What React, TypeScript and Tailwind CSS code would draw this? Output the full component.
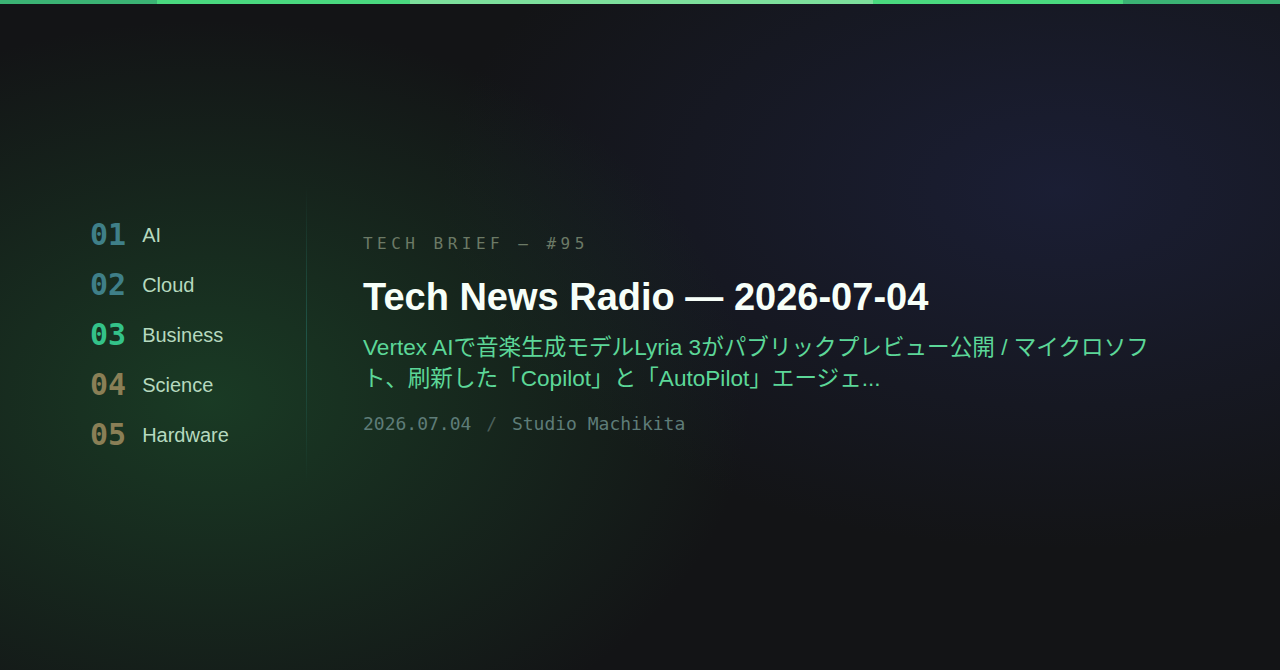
import React from "react";

const topics = [
  { n: "01", label: "AI", color: "text-[#3f7f88]" },
  { n: "02", label: "Cloud", color: "text-[#3f7f88]" },
  { n: "03", label: "Business", color: "text-[#34c289]" },
  { n: "04", label: "Science", color: "text-[#8a7f56]" },
  { n: "05", label: "Hardware", color: "text-[#8a7f56]" },
];

export default function App() {
  return (
    <div className="relative h-[670px] w-full overflow-hidden bg-[#131416] bg-[radial-gradient(ellipse_540px_380px_at_210px_400px,rgba(30,84,46,0.6),transparent),radial-gradient(ellipse_620px_360px_at_1060px_190px,rgba(34,40,82,0.5),transparent)] flex flex-col">
      <div className="flex h-1 w-full shrink-0">
        <div className="w-[12.3%] bg-[#3bb374]" />
        <div className="w-[19.7%] bg-[#4ad97f]" />
        <div className="w-[36.2%] bg-[#7ddf9c]" />
        <div className="w-[19.5%] bg-[#4ad97f]" />
        <div className="flex-1 bg-[#3bb374]" />
      </div>
      <div className="flex flex-1 items-center pb-1">
        <div className="mx-auto flex w-[1100px] items-center">
          <nav className="w-[216px] py-[25px]">
            {topics.map((t) => (
              <div key={t.n} className="flex h-[50px] items-center gap-4">
                <span
                  className={`font-bold text-[30px] leading-none ${t.color}`}
                  style={{ fontFamily: '"DejaVu Sans Mono", monospace' }}
                >
                  {t.n}
                </span>
                <span
                  className="text-[20px] text-[#b6d9bf]"
                  style={{ fontFamily: '"Liberation Sans", Arial, sans-serif' }}
                >
                  {t.label}
                </span>
              </div>
            ))}
          </nav>
          <div className="w-px self-stretch bg-gradient-to-b from-transparent via-[#1f5447] to-transparent" />
          <div className="pl-14 pb-[3px]">
            <div
              className="text-[16px] leading-[27px] tracking-[0.28em] text-[#6c7a66]"
              style={{ fontFamily: '"DejaVu Sans Mono", monospace' }}
            >
              TECH BRIEF — #95
            </div>
            <h1
              className="mt-[17px] text-[38px] font-bold leading-[46px] text-[#f7fff9]"
              style={{ fontFamily: '"Liberation Sans", Arial, sans-serif' }}
            >
              Tech News Radio — 2026-07-04
            </h1>
            <p
              className="mt-3 max-w-[800px] text-[22.6px] leading-[31px] text-[#5cd798]"
              style={{ fontFamily: '"Liberation Sans", "Noto Sans CJK JP", sans-serif' }}
            >
              Vertex AIで音楽生成モデルLyria 3がパブリックプレビュー公開 / マイクロソフト、刷新した「Copilot」と「AutoPilot」エージェ...
            </p>
            <div
              className="mt-[17px] text-[18px] leading-[26px] text-[#5e7c78]"
              style={{ fontFamily: '"DejaVu Sans Mono", monospace' }}
            >
              2026.07.04 <span className="mx-1 text-[#4a5f5a]">/</span> Studio Machikita
            </div>
          </div>
        </div>
      </div>
    </div>
  );
}
